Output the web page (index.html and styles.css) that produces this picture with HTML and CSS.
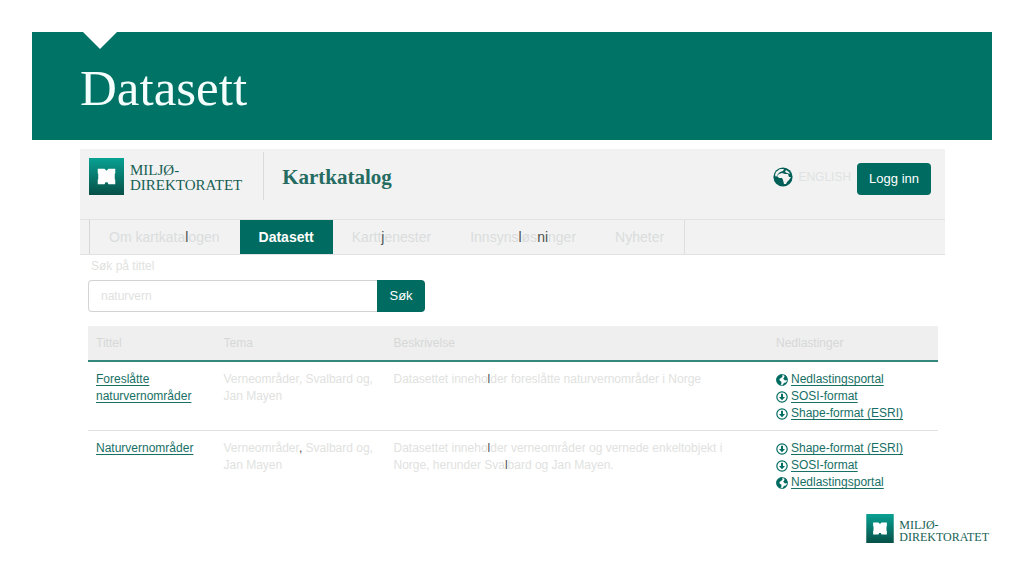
FILE: index.html
```html
<!DOCTYPE html>
<html lang="no">
<head>
<meta charset="utf-8">
<meta name="viewport" content="width=device-width, initial-scale=1">
<title>Datasett</title>
<link rel="stylesheet" href="styles.css">
</head>
<body>
<svg class="defs" aria-hidden="true">
  <defs>
    <linearGradient id="grad" x1="0" y1="0" x2="0" y2="1"><stop offset="0" stop-color="#08a193"/><stop offset="1" stop-color="#075047"/></linearGradient>
    <symbol id="logo" viewBox="0 0 36 38">
      <path d="M0 0h36v38H0z" fill="url(#grad)"/>
      <path d="M9 11h7l2 2 2-2h7v5h-.5v6h.5v5h-7l-1-2h-2l-1 2H9v-5h.5v-6H9z" fill="#fff"/>
    </symbol>
    <symbol id="globe" viewBox="0 0 20 20">
      <circle cx="10" cy="10" r="9" fill="#fff" stroke="#006b60" stroke-width="1.5"/>
      <path d="M1 11C0 5 4 1 10 1l1 3-3 3-2 1 0 3 3 2 0 3-2 3C3 17 1 15 1 11zM14 1c4 2 5 5 5 9l-4 1-3-3 2-3zM19 12c-1 4-4 7-8 7l2-4 3-1z" fill="#006b60"/>
    </symbol>
    <symbol id="africa" viewBox="0 0 20 20">
      <circle cx="10" cy="10" r="9.6" fill="#005f56"/>
      <path d="M6 7l3-1 3 1 3 0 1 3 2 0-2 3-2 2-1 2-2 0-1-4-1-2-3 0-2-2zM2 8l1-3 4-3 4 0-1 2-3 1-2 2-2 3zM13 3l3 2 1 2-3-1-2-1z" fill="#f2f2f2"/>
    </symbol>
    <symbol id="down" viewBox="0 0 20 20">
      <circle cx="10" cy="10" r="8.6" fill="#fff" stroke="#006b60" stroke-width="2"/>
      <path d="M8.4 4.5h3.2V10H15l-5 5.5L5 10h3.4z" fill="#006b60"/>
    </symbol>
  </defs>
</svg>
<header class="banner"><h1>Datasett</h1></header>
<main class="catalog">
  <div class="panel">
    <div class="brandbar">
      <a class="brand" href="#"><svg class="mark"><use href="#logo"/></svg><span>MILJØ-<br>DIREKTORATET</span></a>
      <span class="product">Kartkatalog</span>
      <a class="language" href="#"><svg class="world"><use href="#africa"/></svg>ENGLISH</a>
      <button class="button login" type="button">Logg inn</button>
    </div>
    <nav class="tabs">
      <a href="#">Om kartkata<b>l</b>ogen</a>
      <a class="active" href="#" aria-current="page">Datasett</a>
      <a href="#">Kartt<b>j</b>enester</a>
      <a href="#">Innsyns<b>l</b>øs<b>ni</b>nger</a>
      <a href="#">Nyheter</a>
    </nav>
  </div>
  <form class="search">
    <label for="query">Søk på tittel</label>
    <div class="searchrow">
      <input id="query" type="text" value="naturvern">
      <button class="button" type="submit">Søk</button>
    </div>
  </form>
  <table class="datasets">
    <colgroup><col class="narrow"><col class="medium"><col class="wide"><col class="medium"></colgroup>
    <thead><tr><th>Tittel</th><th>Tema</th><th>Beskrivelse</th><th>Nedlastinger</th></tr></thead>
    <tbody>
      <tr>
        <td><a href="#">Foreslåtte naturvernområder</a></td>
        <td>Verneområder, Svalbard og, Jan Mayen</td>
        <td>Datasettet inneho<b>l</b>der foreslåtte naturvernområder i Norge</td>
        <td><ul>
          <li><svg><use href="#globe"/></svg><a href="#">Nedlastingsportal</a></li>
          <li><svg><use href="#down"/></svg><a href="#">SOSI-format</a></li>
          <li><svg><use href="#down"/></svg><a href="#">Shape-format (ESRI)</a></li>
        </ul></td>
      </tr>
      <tr>
        <td><a href="#">Naturvernområder</a></td>
        <td>Verneområder<b>,</b> Svalbard og, Jan Mayen</td>
        <td>Datasettet inneho<b>l</b>der verneområder og vernede enkeltobjekt i Norge, herunder Sva<b>l</b>bard og Jan Mayen.</td>
        <td><ul>
          <li><svg><use href="#down"/></svg><a href="#">Shape-format (ESRI)</a></li>
          <li><svg><use href="#down"/></svg><a href="#">SOSI-format</a></li>
          <li><svg><use href="#globe"/></svg><a href="#">Nedlastingsportal</a></li>
        </ul></td>
      </tr>
    </tbody>
  </table>
</main>
<footer class="footer">
  <div class="brand small"><svg class="mark"><use href="#logo"/></svg><span>MILJØ-<br>DIREKTORATET</span></div>
</footer>
</body>
</html>
```

FILE: styles.css
```css
* { box-sizing: border-box; }

body {
  margin: 0;
  padding: 32px;
  background: #fff;
  color: #dfe2e0;
  font: 12px/17px "Liberation Sans", Arial, sans-serif;
}

a { color: #176f65; }
b { color: #4c514f; font-weight: inherit; }
svg { display: block; flex: none; }
.defs { position: absolute; width: 0; height: 0; }

.banner {
  position: relative;
  padding: 26px 48px 22px;
  background: #007367;
  color: #f4fffd;
}
.banner::before {
  content: "";
  position: absolute;
  top: 0;
  left: 51px;
  border: 17px solid transparent;
  border-top-color: #fff;
  border-bottom: 0;
}
.banner h1 {
  margin: 0;
  font: 51px/60px "Liberation Serif", serif;
}

.catalog { margin: 9px 47px 0 48px; }

.panel {
  background: #f2f2f2;
  border-bottom: 1px solid #e2e2e2;
}
.brandbar {
  display: flex;
  align-items: flex-start;
  padding: 3px 14px 19px 9px;
}
.brand {
  display: flex;
  gap: 6px;
  color: #175f55;
  font: 15px/15px "Liberation Serif", serif;
  text-decoration: none;
}
.brandbar .brand { padding: 6px 21px 0 0; }
.brand span { padding-top: 5px; }
.mark { width: 35px; height: 37px; }
.product {
  padding: 13px 0 11px 18px;
  border-left: 1px solid #dadada;
  color: #256b61;
  font: bold 21px/24px "Liberation Serif", serif;
}
.language {
  display: flex;
  align-items: center;
  gap: 5px;
  margin: 15px 6px 0 auto;
  color: #dfe2e2;
  font-size: 12px;
  line-height: 20px;
  text-decoration: none;
}
.world { width: 20px; height: 20px; }

.button {
  padding: 0 12px;
  border: 0;
  border-radius: 0 4px 4px 0;
  background: #006b60;
  color: #fff;
  font: 13px/32px "Liberation Sans", Arial, sans-serif;
}
.login { margin-top: 11px; border-radius: 4px; }

.tabs {
  display: flex;
  padding-left: 9px;
  border-top: 1px solid #e2e2e2;
}
.tabs a {
  padding: 0 20px 0 19px;
  color: #dadddd;
  font-size: 14px;
  line-height: 34px;
  text-decoration: none;
}
.tabs a:first-child { border-left: 1px solid #d6d6d6; }
.tabs a:last-child { border-right: 1px solid #dedede; }
.tabs .active { padding: 0 19px; background: #006b60; color: #fff; font-weight: bold; }

.search { padding: 3px 8px 14px; }
.search label { display: block; padding: 0 3px 5px; }
.searchrow { display: flex; width: 40%; min-width: 240px; padding-right: 3px; }
.searchrow input {
  flex: 1;
  min-width: 0;
  padding: 0 12px;
  border: 1px solid #d2d4d4;
  border-right: 0;
  border-radius: 4px 0 0 4px;
  background: #fff;
  color: #dfe2e0;
  font: inherit;
}

.datasets {
  width: calc(100% - 15px);
  margin-left: 8px;
  border-collapse: collapse;
  table-layout: fixed;
}
.narrow { width: 15%; }
.medium { width: 20%; }
.wide { width: 45%; }
.datasets th {
  padding: 9px 8px 8px;
  border-bottom: 2px solid #34877b;
  background: #efefef;
  color: #d6d8d7;
  font-weight: normal;
  text-align: left;
}
.datasets td { padding: 9px 8px 8px; vertical-align: top; }
.datasets tbody tr + tr { border-top: 1px solid #e0e2e1; }
.datasets ul { margin: 0; padding: 0; list-style: none; }
.datasets li { display: flex; align-items: center; gap: 3px; }
.datasets li svg { width: 12px; height: 12px; }
.datasets a { text-underline-offset: 2px; }

.footer {
  display: flex;
  justify-content: flex-end;
  padding: 15px 3px 0;
}
.small { gap: 5px; font-size: 12px; line-height: 12px; }
.small .mark { width: 28px; height: 29px; }
```
